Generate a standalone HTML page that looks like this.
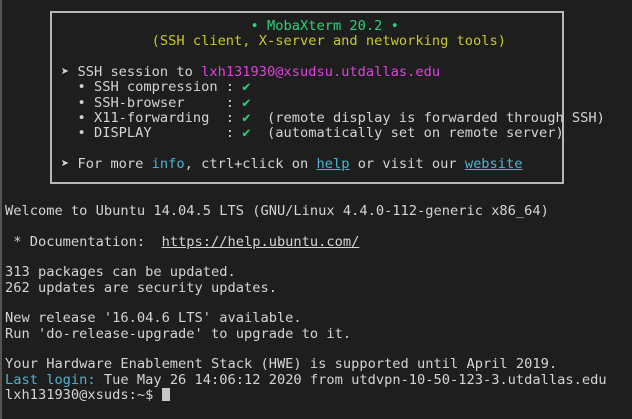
<!DOCTYPE html>
<html><head><style>
html,body{margin:0;padding:0;background:#1e1e1e;width:632px;height:419px;overflow:hidden;}
body{position:relative;font-family:"DejaVu Sans Mono","Liberation Mono",monospace;font-size:13.7px;color:#d4d4d4;}
pre{margin:0;font:inherit;line-height:15.33px;position:absolute;white-space:pre;}
.box{position:absolute;left:50px;top:11px;width:510px;height:169px;border:2px solid #b8b8b8;box-sizing:content-box;}
.g{color:#2fd07a}.y{color:#c8c82a}.m{color:#e040e0}.c{color:#4fb3cf}.u{text-decoration:underline}
.lb{position:absolute;left:0;top:0;width:2px;height:419px;background:#555;}
.cur{display:inline-block;width:8px;height:13px;background:#c8c8c8;vertical-align:-2px;}
</style></head><body>
<div class="lb"></div>
<div class="box"></div>
<pre style="left:61px;top:19px;"><span class="g">                       • MobaXterm 20.2 •</span>
<span class="y">           (SSH client, X-server and networking tools)</span>

➤ SSH session to <span class="m">lxh131930@xsudsu.utdallas.edu</span>
  • SSH compression : <span class="g">✔</span>
  • SSH-browser     : <span class="g">✔</span>
  • X11-forwarding  : <span class="g">✔</span>  (remote display is forwarded through SSH)
  • DISPLAY         : <span class="g">✔</span>  (automatically set on remote server)

➤ For more <span class="c">info</span>, ctrl+click on <span class="c u">help</span> or visit our <span class="c u">website</span></pre>
<pre style="left:5px;top:204px;">Welcome to Ubuntu 14.04.5 LTS (GNU/Linux 4.4.0-112-generic x86_64)

 * Documentation:  <span class="u">https://help.ubuntu.com/</span>

313 packages can be updated.
262 updates are security updates.

New release '16.04.6 LTS' available.
Run 'do-release-upgrade' to upgrade to it.

Your Hardware Enablement Stack (HWE) is supported until April 2019.
<span class="c">Last login:</span> Tue May 26 14:06:12 2020 from utdvpn-10-50-123-3.utdallas.edu
lxh131930@xsuds:~$ <span class="cur"></span></pre>
</body></html>
